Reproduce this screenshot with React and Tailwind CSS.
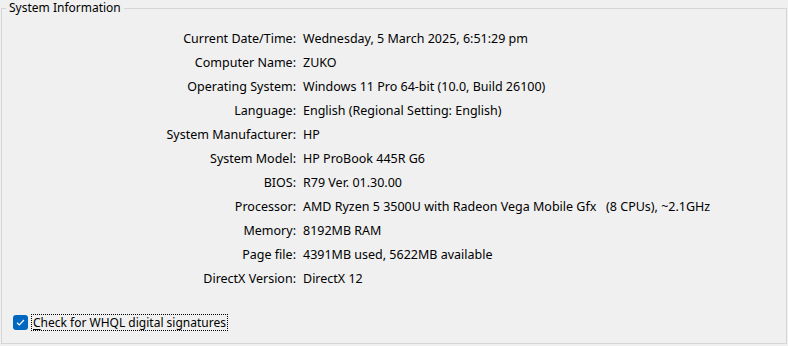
import React from "react";

const rows = [
  ["Current Date/Time:", "Wednesday, 5 March 2025, 6:51:29 pm"],
  ["Computer Name:", "ZUKO"],
  ["Operating System:", "Windows 11 Pro 64-bit (10.0, Build 26100)"],
  ["Language:", "English (Regional Setting: English)"],
  ["System Manufacturer:", "HP"],
  ["System Model:", "HP ProBook 445R G6"],
  ["BIOS:", "R79 Ver. 01.30.00"],
  ["Processor:", "AMD Ryzen 5 3500U with Radeon Vega Mobile Gfx   (8 CPUs), ~2.1GHz"],
  ["Memory:", "8192MB RAM"],
  ["Page file:", "4391MB used, 5622MB available"],
  ["DirectX Version:", "DirectX 12"],
];

export default function App() {
  return (
    <div
      className="w-[788px] h-[346px] bg-[#f0f0f0] text-black text-[12px] overflow-hidden"
      style={{ fontFamily: '"Noto Sans", "Segoe UI", sans-serif' }}
    >
      <fieldset className="ml-[1px] mr-[1px] mt-[1px] h-[343px] border border-[#d5d5d5] rounded-none px-0 m-0">
        <legend className="ml-[4px] px-[3px] leading-[14px] text-[12px]">System Information</legend>
        <div className="grid grid-cols-[294px_1fr] gap-x-[7px] mt-[12px] text-[12.5px]">
          {rows.map(([l, v]) => (
            <React.Fragment key={l}>
              <div className="text-right h-[24px] leading-[24px] whitespace-pre">{l}</div>
              <div className="h-[24px] leading-[24px] whitespace-pre">{v}</div>
            </React.Fragment>
          ))}
        </div>
        <div className="flex items-center mt-[23px] ml-[11px]">
          <div className="w-[15px] h-[15px] rounded-[3px] bg-[#0067c0] flex items-center justify-center">
            <svg width="11" height="11" viewBox="0 0 11 11">
              <path d="M2 5.8 L4.3 8 L9 3" fill="none" stroke="white" strokeWidth="1.2" />
            </svg>
          </div>
          <div className="ml-[3px] px-[1px] border border-dotted border-black leading-[15px]">
            <span className="underline underline-offset-2">C</span>heck for WHQL digital signatures
          </div>
        </div>
      </fieldset>
    </div>
  );
}
